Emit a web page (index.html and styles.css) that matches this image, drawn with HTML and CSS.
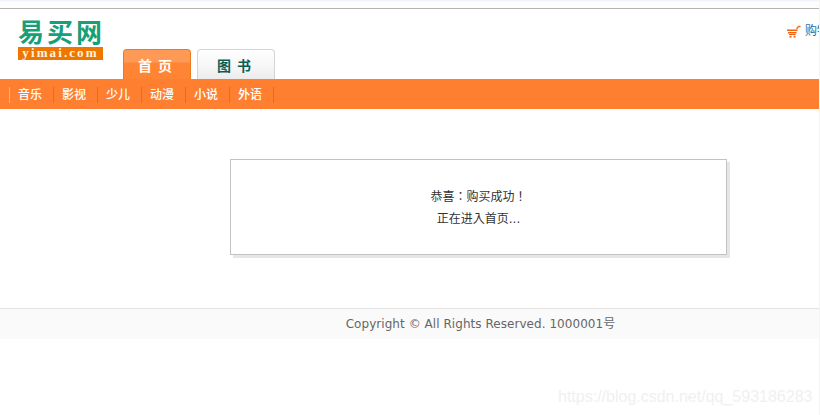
FILE: index.html
```html
<!DOCTYPE html>
<html lang="zh-CN">
<head>
<meta charset="utf-8">
<title>易买网</title>
<link rel="stylesheet" href="styles.css">
</head>
<body>
<div class="page">
  <div class="topstrip"></div>
  <header class="header">
    <div class="logo">
      <div class="logo-cn">易买网</div>
      <div class="logo-en">yimai.com</div>
    </div>
    <nav class="tabs">
      <a class="tab tab-active">首 页</a>
      <a class="tab tab-plain">图 书</a>
    </nav>
    <div class="cart">
      <svg class="cart-icon" width="14" height="13" viewBox="0 0 14 13">
        <path d="M9.5 4 L11.5 1.5 H13.5" fill="none" stroke="#f0701a" stroke-width="1.3"/>
        <path d="M0 4.5 H10.5 V6 H0 Z M1 7 H9.5 V8.5 H1 Z M2 9 H8.5 V10 H2 Z" fill="#f2620f"/>
        <rect x="2.5" y="10.8" width="2" height="1.8" fill="#f2620f"/>
        <rect x="6.5" y="10.8" width="2" height="1.8" fill="#f2620f"/>
      </svg>
      <span class="cart-text">购物车</span>
    </div>
  </header>
  <div class="subnav">
    <a class="subnav-item">音乐</a>
    <a class="subnav-item">影视</a>
    <a class="subnav-item">少儿</a>
    <a class="subnav-item">动漫</a>
    <a class="subnav-item">小说</a>
    <a class="subnav-item">外语</a>
  </div>
  <main class="main">
    <div class="notice">
      <p>恭喜：购买成功！</p>
      <p>正在进入首页...</p>
    </div>
  </main>
  <footer class="footer">Copyright © All Rights Reserved. 1000001号</footer>
  <div class="watermark">https://blog.csdn.net/qq_593186283</div>
</div>
</body>
</html>
```
FILE: styles.css
```css
* { box-sizing: border-box; }
html, body { margin: 0; padding: 0; background: #fff; }
body { font: 12px/22px "Liberation Sans", "Noto Sans CJK SC", sans-serif; color: #333; overflow: hidden; }
.page { position: relative; width: 820px; height: 415px; overflow: hidden; border-right: 1px solid #f4f4f4; }
.topstrip { height: 9px; background: linear-gradient(#f0f4fb 0, #f0f4fb 1px, #fdfdfe 2px); border-bottom: 1px solid #b4b4b4; }
.header { display: flex; height: 70px; position: relative; }
.logo { width: 123px; padding: 9px 0 0 18px; }
.logo-cn { width: 85px; height: 29px; font: bold 26px/25px "Noto Sans CJK SC", sans-serif; color: #17a078; letter-spacing: 3px; white-space: nowrap; }
.logo-en { width: 85px; height: 13px; background: #ee7700; color: #fdf3e4; font: bold 13px/11px "Liberation Serif", serif; letter-spacing: 2.1px; text-align: center; white-space: nowrap; }
.tabs { display: flex; gap: 6px; align-items: flex-end; }
.tab { display: block; height: 30px; font-size: 14px; font-weight: bold; line-height: 33px; word-spacing: 2px; text-align: center; border-radius: 4px 4px 0 0; padding-right: 4px; }
.tab-active { width: 68px; color: #fff; background: linear-gradient(#ff9a56 0, #ff9a56 12px, #ff8534 13px); border: 1px solid #ee7a1e; border-bottom: 0; }
.tab-plain { width: 78px; color: #0a5f55; background: linear-gradient(#fff 0, #f8f8f8 14px, #ececec 100%); border: 1px solid #d4d4d4; border-bottom: 0; }
.cart { position: absolute; left: 787px; top: 14px; display: flex; align-items: center; gap: 4px; white-space: nowrap; }
.cart-icon { flex: none; }
.cart-text { color: #2a6c9c; line-height: 16px; }
.subnav { display: flex; height: 30px; padding: 2px 0 0 9px; background: #ff7f30; align-items: center; }
.subnav-item { width: 44px; height: 16px; padding-left: 8px; border-left: 1px solid #e2701a; color: #fff; font-weight: 500; line-height: 16px; }
.subnav-item:first-child { border-left-color: #f7b27a; }
.subnav-item:last-child { width: 45px; border-right: 1px solid #e2701a; }
.main { height: 199px; padding: 50px 0 0 230px; }
.notice { width: 497px; height: 96px; padding-top: 26px; border: 1px solid #c2c2c2; box-shadow: 3px 3px 0 #e6e6e6; text-align: center; color: #333; font-family: "DejaVu Sans", "Noto Sans CJK TC", sans-serif; font-feature-settings: "locl" 0; }
.notice p { margin: 0; }
.footer { height: 31px; background: #fafafa; border-top: 1px solid #e2e2e2; padding-left: 142px; text-align: center; font: 12px/30px "DejaVu Sans", "Noto Sans CJK SC", sans-serif; letter-spacing: 0.05px; color: #666; }
.watermark { position: absolute; left: 558px; top: 388px; font: 16px/18px "Liberation Sans", sans-serif; color: #f0f0f0; white-space: nowrap; }
```
